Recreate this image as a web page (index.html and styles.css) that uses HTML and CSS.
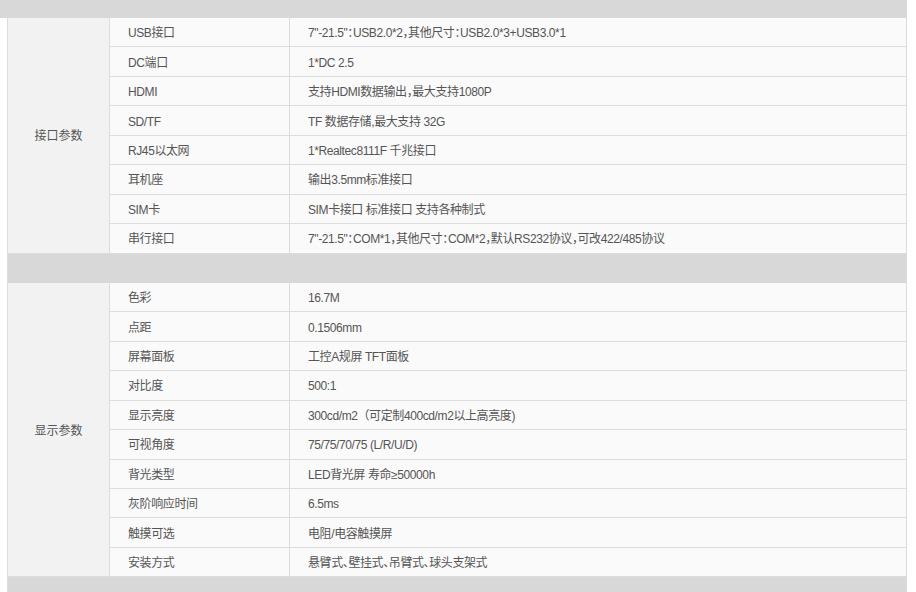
FILE: index.html
```html
<!DOCTYPE html>
<html lang="zh-CN">
<head>
<meta charset="utf-8">
<title>参数</title>
<link rel="stylesheet" href="styles.css">
</head>
<body>
<div class="top-band"></div>
<div class="wrap">
<table class="spec">
  <tbody>
    <tr><td class="group" rowspan="8">接口参数</td><td class="name">USB接口</td><td class="val">7"-21.5"：USB2.0*2，其他尺寸：USB2.0*3+USB3.0*1</td></tr>
    <tr><td class="name">DC端口</td><td class="val">1*DC 2.5</td></tr>
    <tr><td class="name">HDMI</td><td class="val">支持HDMI数据输出，最大支持1080P</td></tr>
    <tr><td class="name">SD/TF</td><td class="val">TF 数据存储,最大支持 32G</td></tr>
    <tr><td class="name">RJ45以太网</td><td class="val">1*Realtec8111F 千兆接口</td></tr>
    <tr><td class="name">耳机座</td><td class="val">输出3.5mm标准接口</td></tr>
    <tr><td class="name">SIM卡</td><td class="val">SIM卡接口 标准接口 支持各种制式</td></tr>
    <tr><td class="name">串行接口</td><td class="val">7"-21.5"：COM*1，其他尺寸：COM*2，默认RS232协议，可改422/485协议</td></tr>
    <tr class="band"><td colspan="3"></td></tr>
    <tr><td class="group" rowspan="10">显示参数</td><td class="name">色彩</td><td class="val">16.7M</td></tr>
    <tr><td class="name">点距</td><td class="val">0.1506mm</td></tr>
    <tr><td class="name">屏幕面板</td><td class="val">工控A规屏 TFT面板</td></tr>
    <tr><td class="name">对比度</td><td class="val">500:1</td></tr>
    <tr><td class="name">显示亮度</td><td class="val full">300cd/m2（可定制400cd/m2以上高亮度)</td></tr>
    <tr><td class="name">可视角度</td><td class="val">75/75/70/75 (L/R/U/D)</td></tr>
    <tr><td class="name">背光类型</td><td class="val">LED背光屏 寿命≥50000h</td></tr>
    <tr><td class="name">灰阶响应时间</td><td class="val">6.5ms</td></tr>
    <tr><td class="name">触摸可选</td><td class="val">电阻/电容触摸屏</td></tr>
    <tr><td class="name">安装方式</td><td class="val">悬臂式、壁挂式、吊臂式、球头支架式</td></tr>
    <tr class="band"><td colspan="3"></td></tr>
  </tbody>
</table>
</div>
</body>
</html>
```
FILE: styles.css
```css
html, body {
  margin: 0;
  padding: 0;
  background: #ffffff;
}
body {
  font-family: "Liberation Sans", "Noto Sans CJK SC", sans-serif;
  font-size: 12px;
  color: #555555;
}
.top-band {
  width: 907px;
  height: 18px;
  background: #d8d8d8;
}
.wrap {
  padding-left: 7px;
}
.spec {
  border-collapse: collapse;
  width: 900px;
  table-layout: fixed;
  margin-top: -1px;
}
.spec td {
  border: 1px solid #dcdcdc;
  height: 29.45px;
  padding: 2px 18px 0;
  line-height: 16px;
  vertical-align: middle;
  background: #fafafa;
  box-sizing: border-box;
  white-space: nowrap;
  letter-spacing: -0.4px;
  font-feature-settings: "halt" 1;
}
.spec td.full {
  font-feature-settings: normal;
}
.spec td.group {
  width: 102px;
  padding: 2px 0 0;
  text-align: center;
  background: #f2f2f2;
  letter-spacing: 0;
}
.spec td.name {
  width: 180px;
}
.spec tr:first-child td {
  border-top-color: #d8d8d8;
}
.spec .band td {
  background: #d8d8d8;
  border-color: #d8d8d8 #dcdcdc #d8d8d8 #dcdcdc;
  padding: 0;
}
```
